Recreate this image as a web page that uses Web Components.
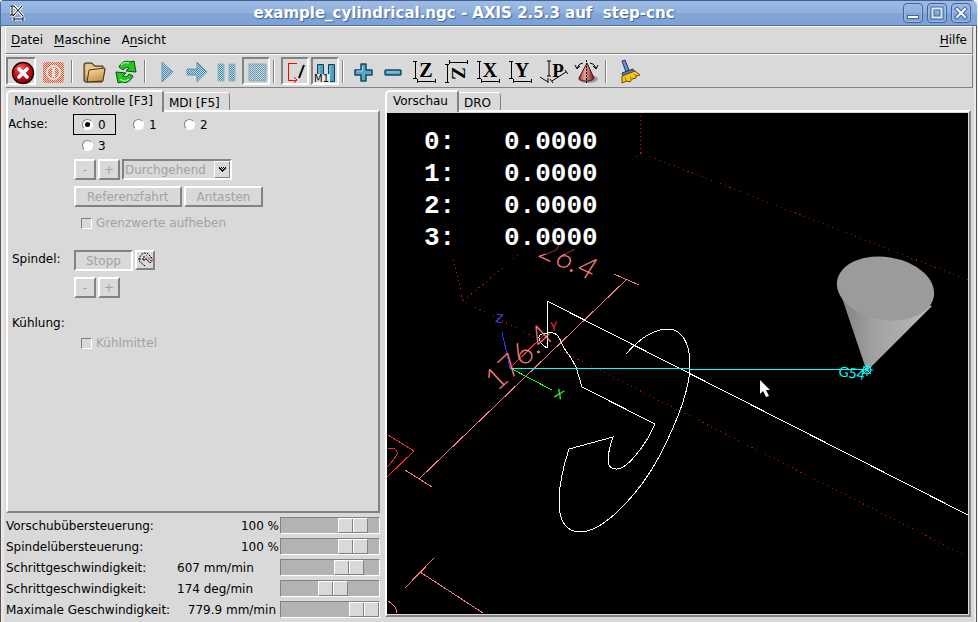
<!DOCTYPE html>
<html lang="de">
<head>
<meta charset="utf-8">
<title>example_cylindrical.ngc - AXIS 2.5.3</title>
<style>
  html, body { height: 100%; }
  body { margin: 0; background: #eeeeee; overflow: hidden; color: #000;
    font: 12px/16px "DejaVu Sans", sans-serif; }
</style>
</head>
<body>
<axis-window>
  <title-bar slot="title">example_cylindrical.ngc - AXIS 2.5.3 auf  step-cnc</title-bar>
  <menu-bar slot="menu"></menu-bar>
  <tool-bar slot="tools"></tool-bar>
  <note-book slot="side" first="Manuelle Kontrolle [F3]" second="MDI [F5]">
    <manual-panel></manual-panel>
  </note-book>
  <override-list slot="side">
    <override-row label="Vorschubübersteuerung:" value="100 %" end at="84"></override-row>
    <override-row label="Spindelübersteuerung:" value="100 %" end at="84"></override-row>
    <override-row label="Schrittgeschwindigkeit:" value="607 mm/min" at="78"></override-row>
    <override-row label="Schrittgeschwindigkeit:" value="174 deg/min" at="54"></override-row>
    <override-row label="Maximale Geschwindigkeit:" value="779.9 mm/min" wide at="100"></override-row>
  </override-list>
  <note-book slot="view" first="Vorschau" second="DRO" flush>
    <tool-preview></tool-preview>
  </note-book>
</axis-window>

<script>
const reset = `
  *, *::before, *::after { box-sizing: border-box; }
  :host { display: block; box-sizing: border-box; }
  button, input, select { font: inherit; color: inherit; margin: 0; padding: 0; border: 0; background: none; border-radius: 0; appearance: none; }
`;
function define(name, render) {
  customElements.define(name, class extends HTMLElement {
    connectedCallback() {
      if (this.shadowRoot) return;
      const t = document.createElement('template');
      const [css, html] = render(this);
      t.innerHTML = `<style>${reset}${css}</style>${html}`;
      this.attachShadow({ mode: 'open' }).append(t.content.cloneNode(true));
    }
  });
}

define('axis-window', () => [`
  :host { height: 100vh; display: flex; flex-direction: column; margin-right: 1px; background: #d9d9d9;
    border-top-left-radius: 4px; border-top-right-radius: 6px; overflow: hidden; }
  .frame { flex: 1; min-height: 0; display: flex; flex-direction: column; border: solid; border-width: 0 1px;
    border-color: #5b5755; box-shadow: inset 3px 0 #ebe5e3, inset -2px 0 #ebe9e8; padding: 0 3px 0 4px; }
  main { flex: 1; min-height: 0; display: grid; grid-template-columns: 374px minmax(0, 1fr); column-gap: 5px; padding: 2px 2px 0 1px; }
  .side { display: flex; flex-direction: column; min-height: 0; }
  .view { display: flex; flex-direction: column; min-height: 0; padding-bottom: 5px; }
  ::slotted(note-book) { flex: 1; min-height: 0; }
`, `<slot name="title"></slot>
  <div class="frame"><slot name="menu"></slot><slot name="tools"></slot>
  <main><div class="side"><slot name="side"></slot></div><div class="view"><slot name="view"></slot></div></main></div>`]);

define('title-bar', () => [`
  :host { display: flex; align-items: center; height: 26px; padding: 0 6px 0 8px; flex: none;
    background: linear-gradient(#9dbbe5, #8fb0dd 50%, #82a6d6 52%, #7da1d2);
    border: solid #4a6ea5; border-width: 1px 0 1px 1px; border-top-color: #41618f; }
  h1 { flex: 1; margin: 0; text-align: center; white-space: pre; color: #fff; font-size: 15px; line-height: 20px; font-weight: bold;
    text-shadow: 1px 1px 1px #40649c; }
  .buttons { display: flex; gap: 4px; }
  button { width: 20px; height: 20px; border: 1px solid #40649c; border-radius: 4px; box-shadow: inset 0 0 0 1px #9dbce6; display: grid; place-items: center; }
  svg { display: block; }
`, `<svg width="16" height="16" viewBox="0 0 16 16" fill="none">
    <path d="M1 1h4M3 1v9M1 10h4M5 1l9 10M13 1L4 11M5 14h9M5 12v4M14 12v4" stroke="#fff" stroke-width="3"/>
    <path d="M1 1h4M3 1v9M1 10h4M5 1l9 10M13 1L4 11M5 14h9M5 12v4M14 12v4" stroke="#000"/></svg>
  <h1><slot></slot></h1>
  <div class="buttons">
    <button aria-label="Minimieren"><svg width="14" height="14"><rect x="1.500" y="9.500" width="11" height="3" fill="#fff" stroke="#40649c"/></svg></button>
    <button aria-label="Maximieren"><svg width="14" height="14" fill="none"><rect x="2.500" y="2.500" width="9" height="9" stroke="#40649c" stroke-width="4"/><rect x="2.500" y="2.500" width="9" height="9" stroke="#dfe9f7" stroke-width="2"/></svg></button>
    <button aria-label="Schließen"><svg width="14" height="14" fill="none" stroke-linecap="square"><path d="M3 3l8 8M11 3l-8 8" stroke="#40649c" stroke-width="4"/><path d="M3 3l8 8M11 3l-8 8" stroke="#fff" stroke-width="2"/></svg></button>
  </div>`]);

define('menu-bar', () => [`
  :host { display: flex; flex: none; height: 28px; align-items: center; gap: 11px; padding: 0 5px;
    border: 1px solid; border-color: #fff #828282 #828282 #fff; }
  button:last-child { margin-left: auto; }
  button { line-height: 18px; }
  u { text-underline-offset: 2px; }
`, `<button><u>D</u>atei</button><button><u>M</u>aschine</button><button>A<u>n</u>sicht</button><button><u>H</u>ilfe</button>`]);

const dots = (c) => `<defs><pattern id="p" width="2" height="2" patternUnits="userSpaceOnUse"><rect width="2" height="2" fill="#d9d9d9"/><path shape-rendering="crispEdges" d="M0 0h1v1H0zM1 1h1v1H1z" fill="${c}"/></pattern></defs>`;
const axisIcon = (letter) => `<path d="M3 4h4M5 4v17M3 21h4M7 24h18M7 22v4M25 22v4" stroke="#000" fill="none" shape-rendering="crispEdges"/><text x="16" y="20" text-anchor="middle" font-family="Liberation Serif, serif" font-weight="bold" font-size="20">${letter}</text>`;
const icons = {
  stop: `<defs><radialGradient id="r" cx=".4" cy=".3" r=".8"><stop offset="0" stop-color="#f4686a"/><stop offset=".45" stop-color="#cf1015"/><stop offset="1" stop-color="#6e0003"/></radialGradient></defs>
    <g transform="translate(2 1)"><circle cx="15" cy="15" r="10.500" fill="url(#r)" stroke="#2a0000" stroke-width="1.500"/><path d="M11 11l8 8M19 11l-8 8" stroke="#fff" stroke-width="3.600" stroke-linecap="round"/></g>`,
  power: dots('#e0562e') + `<g transform="translate(1 0)"><rect x="4" y="5" width="21" height="21" rx="3" fill="url(#p)"/>
    <circle cx="14.500" cy="15.500" r="6.500" fill="none" stroke="#eddcd6" stroke-width="2"/><path d="M14.500 11v9" stroke="#f0e2dc" stroke-width="3"/></g>`,
  open: `<defs><linearGradient id="f" x2=".4" y2="1"><stop stop-color="#fbe3ad"/><stop offset="1" stop-color="#c9944e"/></linearGradient></defs>
    <path d="M5 24V7l1-1h7l3 3h8v3l2 1-3 12H6z" fill="#b98b50" stroke="#3a2a14"/><path d="M6 9l1-2h5l3 3h8v3H11L7 22z" fill="#e8c690"/><path d="M10 13l16-2-2 13-16 1z" fill="url(#f)" stroke="#4a3519"/>`,
  reload: `<g fill="#22c722" stroke="#0a4d12" stroke-linejoin="round"><path d="M8 10c2-5 7-7 11-5l4-1 2 11-10-1 3-3c-3-1-5 0-6 2z"/><path d="M22 19c-2 5-7 8-11 6l-4 1-2-11 10 1-3 3c2 1 5 1 6-2z"/></g><path d="M10 8c2-3 5-3 8-2M9 22c3 3 7 2 9 0" stroke="#8ef08a" stroke-width="1.500" fill="none"/>`,
  run: dots('#2d86b0') + `<path d="M11 5l11 10L11 25z" fill="url(#p)" stroke="#5d9cbb"/>`,
  step: dots('#2d86b0') + `<path d="M6 12h10V5l10 10-10 10v-7H6z" fill="url(#p)" stroke="#5d9cbb"/>`,
  pause: dots('#2d86b0') + `<path d="M7 7h6v17H7zM18 7h6v17h-6z" fill="url(#p)" stroke="#8ab6ca"/>`,
  halt: dots('#5a9ab6') + `<path d="M8 7h17v17H8z" fill="url(#p)" stroke="#86adbd"/>`,
  skip: `<path d="M17 6H8v17h9M14 20l3 3-3 3" fill="none" stroke="#f00" shape-rendering="crispEdges"/><path d="M19 21L24 8" stroke="#000" stroke-width="2"/>`,
  m1: `<g fill="#4fa0c0" stroke="#0d3f58"><path d="M7.500 7.500h6v15h-6zM18.500 7.500h6v17h-6z"/></g><path d="M9 9v8M20 9v8" stroke="#8bcbe2"/><rect x="4" y="17" width="16" height="9" fill="#e8e8e8"/><text x="4" y="25" font-family="DejaVu Sans, sans-serif" font-size="10">M1</text>`,
  plus: `<path d="M12 7h5v6h6v5h-6v6h-5v-6H6v-5h6z" fill="#5aa6c6" stroke="#104a68" stroke-width="1.500" stroke-linejoin="round"/><path d="M13.500 9v5H8" stroke="#9dd2e6" fill="none"/>`,
  minus: `<rect x="6" y="13" width="16" height="5" rx="1" fill="#5aa6c6" stroke="#104a68" stroke-width="1.500"/><path d="M8 15h12" stroke="#9dd2e6"/>`,
  z: axisIcon('Z'),
  n: `<path d="M3 7h4M5 7v18M3 25h4M7 5h18M7 3v4M25 3v4" stroke="#000" fill="none" shape-rendering="crispEdges"/><text transform="translate(10 10) rotate(90)" font-family="Liberation Serif, serif" font-weight="bold" font-size="19">Z</text>`,
  x: axisIcon('X'), y: axisIcon('Y'),
  p: `<path d="M9 4h4M11 4v15M9 19h4M2 20l8 5M10 21v5M14 24l14-9M12 22l3 4M27 13l3 4" stroke="#000" fill="none"/><text x="20" y="20" text-anchor="middle" font-family="Liberation Serif, serif" font-weight="bold" font-size="19">P</text>`,
  cone: `<defs><linearGradient id="c"><stop stop-color="#8d3a33"/><stop offset=".4" stop-color="#f0a39a"/><stop offset="1" stop-color="#5e1a17"/></linearGradient></defs>
    <ellipse cx="18" cy="22" rx="10" ry="4" fill="#999"/><path d="M17 6L9 21c0 4 15 4 15 0z" fill="url(#c)" stroke="#4a1512"/><path d="M16.500 3v24" stroke="#000" stroke-dasharray="2 1"/><path d="M13 6Q9 6 7 11M20 6q4 0 6 5M5 8l2 4 3-3M28 8l-2 4-3-3" fill="none" stroke="#000"/>`,
  clear: `<path d="M9 4l3-1 4 10-3 2z" fill="#6d8cc8" stroke="#22376b"/><path d="M9 16l11-4 2 3-12 5z" fill="#5c78b4" stroke="#22376b"/><path d="M9 19l13-5 5 4-4 1v2l-4 1-2 3-3-1-5 2z" fill="#f6c61a" stroke="#6b4a00"/><path d="M12 20l1 4M17 19l1 3M21 17l2 2" stroke="#a87c00"/>`
};
define('tool-button', el => [`
  :host { flex: none; }
  button { display: block; width: 28px; height: 28px; border: 2px solid transparent; }
  :host([wide]) button { width: 30px; }
  :host([on]) button { border-color: #828282 #fff #fff #828282; }
  svg { display: block; width: 30px; height: 30px; margin: -2px; overflow: visible; }
  :host(:not([wide])) svg { margin-left: -3px; }
`, `<button aria-label="${el.getAttribute('label')}" ${el.hasAttribute('off') ? 'disabled' : ''}><svg viewBox="0 0 30 30">${icons[el.getAttribute('icon')]}</svg></button>`]);

define('tool-bar', () => [`
  :host { display: flex; flex: none; height: 34px; align-items: center; gap: 2px; padding-left: 0;
    border: 1px solid; border-color: #fff #828282 #828282 #fff; }
  i { width: 2px; height: 23px; margin: 0 4px 0 1px; border-left: 1px solid #828282; border-right: 1px solid #fff; }
  i.far { margin-left: 3px; }
`, `<tool-button wide on icon="stop" label="Notaus"></tool-button><tool-button wide off icon="power" label="Maschine ein"></tool-button><i></i>
  <tool-button wide icon="open" label="Öffnen"></tool-button><tool-button wide icon="reload" label="Neu laden"></tool-button><i></i>
  <tool-button off icon="run" label="Start"></tool-button><tool-button off icon="step" label="Einzelschritt"></tool-button><tool-button off icon="pause" label="Pause"></tool-button><tool-button off on icon="halt" label="Stopp"></tool-button><i></i>
  <tool-button on icon="skip" label="Satz ausblenden"></tool-button><tool-button on icon="m1" label="Optionaler Halt"></tool-button><i></i>
  <tool-button icon="plus" label="Vergrößern"></tool-button><tool-button icon="minus" label="Verkleinern"></tool-button>
  <tool-button wide icon="z" label="Ansicht Z"></tool-button><tool-button wide icon="n" label="Ansicht Z gedreht"></tool-button><tool-button wide icon="x" label="Ansicht X"></tool-button><tool-button wide icon="y" label="Ansicht Y"></tool-button><tool-button wide icon="p" label="Perspektive"></tool-button><tool-button wide icon="cone" label="Drehen"></tool-button><i class="far"></i>
  <tool-button wide icon="clear" label="Werkzeugweg löschen"></tool-button>`]);

define('note-book', el => [`
  :host { display: flex; flex-direction: column; }
  nav { display: flex; align-items: flex-end; height: 20px; flex: none; position: relative; z-index: 1; }
  button { height: 18px; padding: 2px 9px 0 5px; border: solid; border-width: 1px 1px 0 0; border-color: #fff #828282; border-top-right-radius: 4px; white-space: nowrap; }
  button[aria-selected=true] { height: 22px; margin-bottom: -2px; padding: 0 9px 2px 6px; border-width: 2px 2px 0 2px; border-color: #fff #828282 #fff #fff; border-radius: 5px 3px 0 0; background: #d9d9d9; }
  section { flex: 1; min-height: 0; display: flex; flex-direction: column; border: 2px solid; border-color: #fff #828282 #828282 #fff; }
  :host([flush]) section { padding: 1px 1px 1px 0; }
  ::slotted(*) { flex: 1; min-height: 0; }
`, `<nav role="tablist"><button role="tab" aria-selected="true">${el.getAttribute('first')}</button><button role="tab" aria-selected="false">${el.getAttribute('second')}</button></nav>
  <section role="tabpanel"><slot></slot></section>`]);

define('manual-panel', () => [`
  :host { padding: 2px 0; display: grid; grid-template-columns: 65px minmax(0, 1fr); align-content: start; }
  .title { padding-left: 4px; line-height: 20px; }
  .title.cut { margin-left: 1px; padding: 0; overflow: hidden; text-indent: -1px; }
  .axes { display: grid; grid-template-columns: 43px 43px 43px; column-gap: 8px; row-gap: 0; margin-bottom: 3px; }
  .axes label { display: flex; align-items: center; gap: 5px; height: 21px; padding-left: 8px; border: 1px solid transparent; }
  .axes label.focus { border-color: #000; }
  input[type=radio] { width: 11px; height: 11px; border-radius: 50%; background: #fff; border: 1px solid; border-color: #828282 #fff #fff #828282; display: grid; place-items: center; }
  input[type=radio]:checked::before { content: ""; width: 5px; height: 5px; border-radius: 50%; background: #000; }
  .row { display: flex; gap: 2px; align-items: flex-start; padding-left: 1px; margin-bottom: 6px; }
  button { height: 21px; min-width: 22px; border: 2px solid; border-color: #fff #828282 #828282 #fff; line-height: 16px; }
  button:disabled, select, label.off { color: #a3a3a3; opacity: 1; }
  .pad { padding: 0 11px; }
  .down { border-color: #828282 #fff #fff #828282; padding: 0 10px; }
  .icon { min-width: 20px; height: 20px; display: grid; place-items: center; }
  .combo { display: grid; width: 110px; height: 21px; border: 2px solid; border-color: #828282 #fff #fff #828282; align-items: center; }
  .combo > * { grid-area: 1 / 1; }
  .combo select { width: 100%; padding-left: 1px; }
  .combo span { justify-self: end; width: 16px; height: 17px; border: 1px solid; border-color: #fff #828282 #828282 #fff; display: grid; place-items: center; pointer-events: none; }
  label.off { display: flex; align-items: center; gap: 4px; height: 20px; padding-left: 8px; }
  input[type=checkbox] { width: 11px; height: 11px; border: 1px solid; border-color: #828282 #fff #fff #828282; }
  .group { padding-top: 17px; }
  .title.group { padding-top: 16px; }
  .group.far, .title.group.far { padding-top: 9px; }
  .far label { margin-top: 20px; }
`, `<div class="title cut">Achse:</div>
  <div><div class="axes">
    <label class="focus"><input type="radio" name="axis" checked>0</label><label><input type="radio" name="axis">1</label><label><input type="radio" name="axis">2</label><label><input type="radio" name="axis">3</label></div>
    <div class="row"><button disabled>-</button><button disabled>+</button><div class="combo"><select disabled aria-label="Schrittweite"><option>Durchgehend</option></select><span><svg width="7" height="5" viewBox="0 0 7 5" shape-rendering="crispEdges"><path d="M0 0h1v1H0zM2 0h1v1H2zM4 0h1v1H4zM6 0h1v1H6zM1 1h1v1H1zM3 1h1v1H3zM5 1h1v1H5zM0 1h1v1H0zM6 1h1v1H6zM2 2h1v1H2zM4 2h1v1H4zM1 2h1v1H1zM5 2h1v1H5zM3 3h1v1H3zM2 3h1v1H2zM4 3h1v1H4zM3 4h1v1H3z"/></svg></span></div></div>
    <div class="row"><button class="pad" disabled>Referenzfahrt</button><button class="pad" disabled>Antasten</button></div>
    <label class="off"><input type="checkbox" disabled>Grenzwerte aufheben</label></div>
  <div class="title group">Spindel:</div>
  <div class="group"><div class="row"><button class="down" disabled>Stopp</button><button class="icon" disabled aria-label="Spindel drehen"><svg width="16" height="16" viewBox="0 0 16 16" fill="none" stroke="#000" stroke-dasharray="2 1"><path d="M8 14L2 9V6l4-5h4l5 5v3l-2 2-4-4M2 7h9M7 4v6"/><path d="M9 3l5 6M11 9l3-4" stroke="#a030a0"/></svg></button></div>
    <div class="row"><button disabled>-</button><button disabled>+</button></div></div>
  <div class="title group far">Kühlung:</div>
  <div class="group far"><label class="off"><input type="checkbox" disabled>Kühlmittel</label></div>`]);

define('override-list', () => [`:host { flex: none; padding: 2px 0 2px; }`, `<slot></slot>`]);
define('override-row', el => [`
  :host { display: block; }
  label { display: grid; grid-template-columns: 171px minmax(0, 1fr) 100px; align-items: center; height: 21px; }
  span { white-space: nowrap; }
  output { text-align: left; white-space: nowrap; }
  :host([end]) output { text-align: right; padding-right: 1px; }
  :host([wide]) output { text-align: right; padding-right: 4px; }
  input { width: 100%; height: 17px; background: #b3b3b3; border: 1px solid; border-color: #828282 #fff #fff #828282; }
  input::-webkit-slider-thumb { appearance: none; width: 30px; height: 15px; border: 1px solid; border-color: #fff #828282 #828282 #fff;
    background: linear-gradient(90deg, #d9d9d9 13px, #828282 13px 14px, #fff 14px 15px, #d9d9d9 15px); }
`, `<label><span>${el.getAttribute('label')}</span><output>${el.getAttribute('value')}</output><input type="range" min="0" max="100" value="${el.getAttribute('at')}"></label>`]);

define('tool-preview', () => [`
  :host { position: relative; background: #000; overflow: hidden; }
  svg { display: block; position: absolute; inset: 0; width: 100%; height: 100%; }
  dl { position: absolute; left: 0; top: 0; margin: 0; padding: 13px 36px 0 37px; display: grid; grid-template-columns: 80px auto; grid-auto-rows: 32px;
    background: rgb(0 0 0 / 65%); color: #fff; font: bold 26px/32px "Liberation Mono", monospace; }
  dd { margin: 0; }
  text { font-family: Lato, "DejaVu Sans", sans-serif; font-weight: 300; }
  .small text { font-weight: 400; }
`, `<svg viewBox="387 113 581 501" preserveAspectRatio="xMidYMid slice" fill="none" role="img" aria-label="Werkzeugweg">
    <defs><linearGradient id="g" gradientUnits="userSpaceOnUse" x1="845" y1="0" x2="920" y2="0"><stop stop-color="#858585"/><stop offset=".4" stop-color="#a2a2a2"/><stop offset="1" stop-color="#b4b4b4"/></linearGradient></defs>
    <g shape-rendering="crispEdges">
    <path stroke="#e01414" stroke-dasharray="1 3" d="M640 116l1 37M421 116l42 185"/>
    <path stroke="#b41010" stroke-dasharray="1 4" d="M641 153l327 127M641 153L463 301l505 256"/>
    <g stroke="#f47c7c"><path d="M626 280L419 479M614 274l25 11M405 470l27 17M420 572l63 41M405 588l29-30M388 601q8 4 9 12"/></g>
    <path stroke="#f03030" d="M388 435l26 16-27 26M388 449q10-2 9 5-2 5-10 13M510 368l35-34"/>
    <path stroke="#3333f5" d="M502 332l8 36"/><path stroke="#33f533" d="M510 368l42 22"/>
    <path stroke="#fff" d="M547 348C538 343 536 333 544 334C553 331 558 333 561 342C565 352 568 353 571 358L576 367L582 387L655 424C645 447 626 470 616 469C606 469 606 458 613 437L569 449C562 470 559 490 559 502C559 522 567 532 580 532C605 532 642 490 660 455C678 420 690 390 690 365C690 342 681 329 668 329C655 329 640 338 626 354M547 348V301L968 515"/>
    <path stroke="#0ff" d="M510 368.500H690M690 369.500H867"/></g>
    <path fill="url(#g)" d="M837 283L866 369h3L932 306z"/><ellipse cx="885.500" cy="288.500" rx="49" ry="31.500" transform="rotate(9 885.500 288.500)" fill="#9b9b9b"/>
    <path stroke="#0ff" d="M861 370h12M867 364v12M863 366l8 8M871 366l-8 8"/><circle cx="867" cy="370" r="4" stroke="#0ff"/>
    <g fill="#f47c7c"><text transform="translate(497 392) rotate(-43)" font-size="31">176.4</text><text transform="translate(537 256) rotate(25)" font-size="31" font-style="italic">26.4</text></g>
    <g class="small"><text transform="translate(838 376) rotate(9)" font-size="14" fill="#0ff">G54</text>
    <text transform="translate(554 397) rotate(20)" font-size="13" fill="#3f3" font-style="italic">X</text>
    <text transform="translate(551 331) rotate(-10)" font-size="12" fill="#f33" font-style="italic">Y</text>
    <text transform="translate(495 322) rotate(10)" font-size="12" fill="#44f">Z</text></g>
    <path d="M760 380v14l3-3 3 6 3-1-3-6h4z" fill="#fff"/>
  </svg>
  <dl><dt>0:</dt><dd>0.0000</dd><dt>1:</dt><dd>0.0000</dd><dt>2:</dt><dd>0.0000</dd><dt>3:</dt><dd>0.0000</dd></dl>`]);
</script>
</body>
</html>
